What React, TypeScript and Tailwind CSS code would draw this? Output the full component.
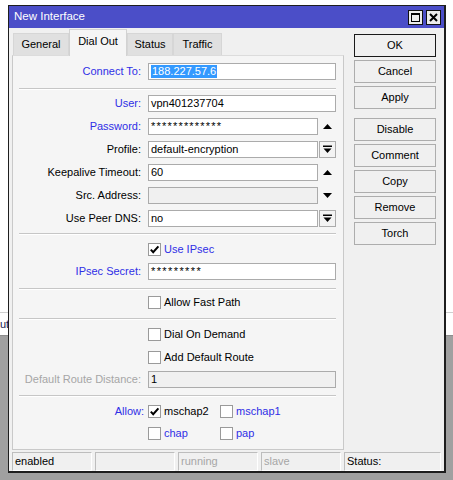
import type { ReactNode } from 'react'

const BLUE = 'text-[#2f2fe6]'
const GREY = 'text-[#a6a6a6]'

function UpArrow() {
  return (
    <svg width="9" height="5" viewBox="0 0 9 5">
      <polygon points="0,5 4.5,0 9,5" fill="#000" />
    </svg>
  )
}

function DownArrow() {
  return (
    <svg width="9" height="5" viewBox="0 0 9 5">
      <polygon points="0,0 9,0 4.5,5" fill="#000" />
    </svg>
  )
}

function DropIcon() {
  return (
    <svg width="9" height="9" viewBox="0 0 9 9">
      <rect x="0" y="0.5" width="9" height="1.5" fill="#000" />
      <polygon points="0.5,3.5 8.5,3.5 4.5,8" fill="#000" />
    </svg>
  )
}

function Check() {
  return (
    <svg width="11" height="11" viewBox="0 0 11 11">
      <polyline points="1.8,5.6 4.2,8.2 9.4,2.4" fill="none" stroke="#000" strokeWidth="2" />
    </svg>
  )
}

function Box({ checked }: { checked?: boolean }) {
  return (
    <span className="flex h-[13px] w-[13px] shrink-0 items-center justify-center border border-[#9a9a9a] bg-white">
      {checked && <Check />}
    </span>
  )
}

function Sep({ mt }: { mt: string }) {
  return <div className={`ml-[6px] mr-[7px] h-[2px] border-t border-b border-t-[#c6c6c6] border-b-white ${mt}`} />
}

function Field({
  children,
  grey,
  side,
  tracking,
}: {
  children?: ReactNode
  grey?: boolean
  side?: 'up' | 'down' | 'drop'
  tracking?: string
}) {
  return (
    <div className="flex h-[17px] w-[188px] items-center gap-[1px]">
      <div
        className={`flex h-[17px] flex-1 items-center border border-[#ababab] px-[2px] leading-none ${grey ? 'bg-[#f0f0f0]' : 'bg-white'} ${tracking ?? ''}`}
      >
        {children}
      </div>
      {side === 'up' && (
        <div className="flex h-[17px] w-[17px] items-center justify-center">
          <UpArrow />
        </div>
      )}
      {side === 'down' && (
        <div className="flex h-[17px] w-[17px] items-center justify-center">
          <DownArrow />
        </div>
      )}
      {side === 'drop' && (
        <div className="flex h-[17px] w-[17px] items-center justify-center border border-[#ababab] bg-[#f3f3f3]">
          <DropIcon />
        </div>
      )}
    </div>
  )
}

function Row({ label, color, mt, children }: { label: string; color?: string; mt: string; children: ReactNode }) {
  return (
    <div className={`flex h-[17px] items-center leading-[13px] ${mt}`}>
      <div className={`w-[128px] text-right ${color ?? 'text-black'}`}>{label}</div>
      <div className="ml-[7px]">{children}</div>
    </div>
  )
}

function CheckRow({ label, checked, color, mt }: { label: string; checked?: boolean; color?: string; mt: string }) {
  return (
    <div className={`flex h-[13px] items-center leading-[13px] ${mt}`}>
      <div className="w-[135px]" />
      <Box checked={checked} />
      <span className={`ml-[3px] ${color ?? 'text-black'}`}>{label}</span>
    </div>
  )
}

function Tab({ label, width, active }: { label: string; width: string; active?: boolean }) {
  if (active) {
    return (
      <div
        className={`relative z-10 mb-[-1px] flex h-[27px] items-center justify-center border border-b-0 border-[#d2d2d2] bg-[#f5f5f5] pb-[3px] ${width}`}
      >
        {label}
      </div>
    )
  }
  return (
    <div
      className={`flex h-[22px] items-center justify-center border border-b-0 border-[#d6d6d6] bg-[#e0e0e0] ${width}`}
    >
      {label}
    </div>
  )
}

function Btn({ label, primary, mt }: { label: string; primary?: boolean; mt?: string }) {
  return (
    <div
      className={`flex h-[23px] items-center justify-center bg-[#f0f0f0] ${primary ? 'border border-[#1a1a1a]' : 'border border-[#adadad]'} ${mt ?? ''}`}
    >
      {label}
    </div>
  )
}

function Cell({ children, width, color }: { children?: ReactNode; width: string; color?: string }) {
  return (
    <div
      className={`flex h-[19px] items-center border-t border-l border-b border-r border-t-[#bdbdbd] border-l-[#bdbdbd] border-b-white border-r-white px-[2px] ${width} ${color ?? 'text-black'}`}
    >
      {children}
    </div>
  )
}

export default function App() {
  return (
    <div className="relative h-[480px] w-[453px] overflow-hidden bg-[#a0a0a0] font-['Liberation_Sans',Arial,sans-serif] text-[11px] text-black">
      {/* background application behind the dialog */}
      <div className="flex h-[336px] flex-col justify-end bg-white">
        <div className="flex h-[24px] items-center border-t border-b border-t-[#cfcfcf] border-b-[#8c8c8c] text-[#202050]">
          ut
        </div>
      </div>

      {/* dialog window */}
      <div className="absolute left-[8px] top-[5px] flex h-[468px] w-[438px] flex-col border-l border-t border-r-2 border-b-2 border-[#1e1e1e] bg-[#f0f0f0]">
        <div className="flex h-[22px] shrink-0 items-center justify-between bg-[#4b4ec8] pl-[5px] pr-[3px]">
          <span className="text-[11.5px] text-white">New Interface</span>
          <div className="flex gap-[3px]">
            <div className="flex h-[15px] w-[15px] items-center justify-center border border-[#111] bg-[#ececec]">
              <div className="h-[9px] w-[9px] border border-t-2 border-black" />
            </div>
            <div className="flex h-[15px] w-[15px] items-center justify-center border border-[#111] bg-[#ececec]">
              <svg width="9" height="9" viewBox="0 0 9 9">
                <path d="M1 1 L8 8 M8 1 L1 8" stroke="#000" strokeWidth="2" />
              </svg>
            </div>
          </div>
        </div>

        <div className="flex">
          <div className="w-[335px] pl-[3px]">
            <div className="flex h-[27px] items-end pl-[1px]">
              <Tab label="General" width="w-[56px]" />
              <Tab label="Dial Out" width="w-[58px]" active />
              <Tab label="Status" width="w-[46px]" />
              <Tab label="Traffic" width="w-[49px]" />
            </div>
            <div className="h-[395px] w-[332px] overflow-hidden border border-[#c9c9c9] border-t-[#dcdcdc] bg-[#f5f5f5]">
              <Row label="Connect To:" color={BLUE} mt="mt-[7px]">
                <Field>
                  <span className="bg-[#3399ff] px-[1px] py-[1px] text-white">188.227.57.6</span>
                </Field>
              </Row>
              <Sep mt="mt-[8px]" />
              <Row label="User:" color={BLUE} mt="mt-[5px]">
                <Field>vpn401237704</Field>
              </Row>
              <Row label="Password:" color={BLUE} mt="mt-[6px]">
                <Field side="up" tracking="tracking-[1.2px]">*************</Field>
              </Row>
              <Row label="Profile:" mt="mt-[6px]">
                <Field side="drop">default-encryption</Field>
              </Row>
              <Row label="Keepalive Timeout:" mt="mt-[6px]">
                <Field side="up">60</Field>
              </Row>
              <Row label="Src. Address:" mt="mt-[6px]">
                <Field side="down" grey />
              </Row>
              <Row label="Use Peer DNS:" mt="mt-[6px]">
                <Field side="drop">no</Field>
              </Row>
              <Sep mt="mt-[6px]" />
              <CheckRow label="Use IPsec" checked color={BLUE} mt="mt-[8px]" />
              <Row label="IPsec Secret:" color={BLUE} mt="mt-[7px]">
                <Field tracking="tracking-[1.4px]">*********</Field>
              </Row>
              <Sep mt="mt-[8px]" />
              <CheckRow label="Allow Fast Path" mt="mt-[6px]" />
              <Sep mt="mt-[9px]" />
              <CheckRow label="Dial On Demand" mt="mt-[8px]" />
              <CheckRow label="Add Default Route" mt="mt-[10px]" />
              <Row label="Default Route Distance:" color={GREY} mt="mt-[7px]">
                <Field grey>1</Field>
              </Row>
              <Sep mt="mt-[7px]" />
              <div className="mt-[8px] flex h-[13px] items-center leading-[13px]">
                <div className={`w-[131px] text-right ${BLUE}`}>Allow:</div>
                <div className="ml-[4px] flex w-[72px] items-center">
                  <Box checked />
                  <span className="ml-[3px]">mschap2</span>
                </div>
                <Box />
                <span className={`ml-[3px] ${BLUE}`}>mschap1</span>
              </div>
              <div className="mt-[9px] flex h-[13px] items-center leading-[13px]">
                <div className="w-[135px]" />
                <div className="flex w-[72px] items-center">
                  <Box />
                  <span className={`ml-[3px] ${BLUE}`}>chap</span>
                </div>
                <Box />
                <span className={`ml-[3px] ${BLUE}`}>pap</span>
              </div>
            </div>
          </div>

          <div className="ml-[10px] flex w-[82px] flex-col gap-[3px] pt-[6px]">
            <Btn label="OK" primary />
            <Btn label="Cancel" />
            <Btn label="Apply" />
            <Btn label="Disable" mt="mt-[6px]" />
            <Btn label="Comment" />
            <Btn label="Copy" />
            <Btn label="Remove" />
            <Btn label="Torch" />
          </div>
        </div>

        <div className="mt-[2px] flex gap-[3px] px-[3px]">
          <Cell width="w-[80px]">enabled</Cell>
          <Cell width="w-[80px]" />
          <Cell width="w-[80px]" color={GREY}>running</Cell>
          <Cell width="w-[80px]" color={GREY}>slave</Cell>
          <Cell width="flex-1">Status:</Cell>
        </div>
      </div>
    </div>
  )
}
